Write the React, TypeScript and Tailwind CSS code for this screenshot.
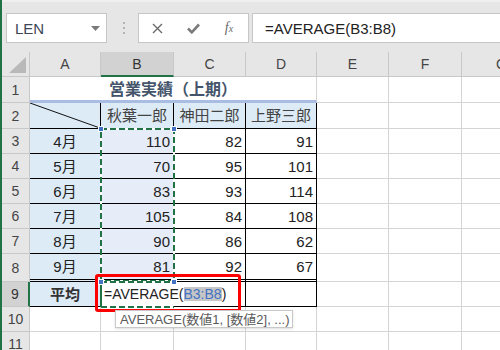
import type { ReactNode } from 'react';

const rows: [string, number, number, number][] = [
  ['4月', 110, 82, 91],
  ['5月', 70, 95, 101],
  ['6月', 83, 93, 114],
  ['7月', 105, 84, 108],
  ['8月', 90, 86, 62],
  ['9月', 81, 92, 67],
];

function RowHead({ children, active }: { children: ReactNode; active?: boolean }) {
  return (
    <div
      className={
        active
          ? 'w-[28px] shrink-0 flex items-center justify-center bg-[#d2d2d2] border-r-2 border-r-[#217346] border-b border-b-[#c8c8c8] text-[14px] text-[#333]'
          : 'w-[28px] shrink-0 flex items-center justify-center bg-[#e6e6e6] border-r border-b border-[#c8c8c8] text-[14px] text-[#444]'
      }
    >
      {children}
    </div>
  );
}

function Grid() {
  // plain light gridline cells for E, F, G
  const plain = (
    <>
      <div className="w-[72px] shrink-0 border-r border-b border-[#d4d4d4]" />
      <div className="w-[73px] shrink-0 border-r border-b border-[#d4d4d4]" />
      <div className="w-[80px] shrink-0 border-r border-b border-[#d4d4d4]" />
    </>
  );

  return (
    <div className="flex flex-col text-[15px] text-[#222]">
      {/* column header */}
      <div className="flex h-[25px] bg-[#e6e6e6] text-[14px] text-[#444]">
        <div className="relative w-[28px] shrink-0 border-r border-b border-[#c8c8c8]">
          <svg className="absolute left-[7px] top-[5px]" width="17" height="17" viewBox="0 0 17 17">
            <polygon points="0,16 17,16 17,0" fill="#b9b9b9" />
          </svg>
        </div>
        {['A', 'B', 'C', 'D', 'E', 'F', 'G'].map((c, i) => {
          const w = ['w-[71px]', 'w-[73px]', 'w-[72px]', 'w-[71px]', 'w-[72px]', 'w-[73px]', 'w-[80px]'][i];
          return c === 'B' ? (
            <div key={c} className={`${w} shrink-0 flex items-center justify-center bg-[#d2d2d2] border-r border-[#c8c8c8] border-b-2 border-b-[#217346] text-[#333]`}>
              {c}
            </div>
          ) : (
            <div key={c} className={`${w} shrink-0 flex items-center justify-center border-r border-b border-[#c8c8c8]`}>
              {c}
            </div>
          );
        })}
      </div>

      {/* row 1 - title */}
      <div className="flex h-[26px]">
        <RowHead>1</RowHead>
        <div className="w-[287px] shrink-0 flex items-center justify-center border-b-[3px] border-[#a9bde3] border-r border-r-[#d4d4d4] font-bold text-[16px] text-[#44546a] pt-[2px]">
          営業実績（上期）
        </div>
        {plain}
      </div>

      {/* row 2 - names */}
      <div className="flex h-[26px] text-[#444]">
        <RowHead>2</RowHead>
        <div className="relative w-[71px] shrink-0 bg-[#ddebf7] border-r border-b border-black">
          <svg className="absolute inset-0" width="100%" height="100%" viewBox="0 0 70 25" preserveAspectRatio="none">
            <line x1="0" y1="0" x2="70" y2="25" stroke="#111" strokeWidth="1" />
          </svg>
        </div>
        <div className="w-[73px] shrink-0 flex items-center justify-center bg-[#ddebf7] border-r border-b border-black">秋葉一郎</div>
        <div className="w-[72px] shrink-0 flex items-center justify-center bg-[#ddebf7] border-r border-b border-black">神田二郎</div>
        <div className="w-[71px] shrink-0 flex items-center justify-center bg-[#ddebf7] border-r border-b border-black">上野三郎</div>
        {plain}
      </div>

      {/* rows 3-8 */}
      {rows.map(([m, b, c, d], i) =>
        i < 5 ? (
          <div key={m} className="flex h-[25px]">
            <RowHead>{i + 3}</RowHead>
            <div className="w-[71px] shrink-0 flex items-center justify-center bg-[#ddebf7] border-r border-b border-black">{m}</div>
            <div className="w-[73px] shrink-0 flex items-center justify-end pr-[3px] bg-[#e6edf8] border-r border-b border-black">{b}</div>
            <div className="w-[72px] shrink-0 flex items-center justify-end pr-[3px] border-r border-b border-black">{c}</div>
            <div className="w-[71px] shrink-0 flex items-center justify-end pr-[3px] border-r border-b border-black">{d}</div>
            {plain}
          </div>
        ) : (
          <div key={m} className="flex h-[28px]">
            <RowHead>{i + 3}</RowHead>
            <div className="w-[71px] shrink-0 flex items-center justify-center bg-[#ddebf7] border-r border-black border-b-[3px] border-b-black border-double">{m}</div>
            <div className="w-[73px] shrink-0 flex items-center justify-end pr-[3px] bg-[#e6edf8] border-r border-black border-b-[3px] border-double">{b}</div>
            <div className="w-[72px] shrink-0 flex items-center justify-end pr-[3px] border-r border-black border-b-[3px] border-double">{c}</div>
            <div className="w-[71px] shrink-0 flex items-center justify-end pr-[3px] border-r border-black border-b-[3px] border-double">{d}</div>
            {plain}
          </div>
        )
      )}

      {/* row 9 - average, B9 in edit mode */}
      <div className="flex h-[25px]">
        <RowHead active>9</RowHead>
        <div className="w-[71px] shrink-0 flex items-center justify-center bg-[#ddebf7] border-r border-b border-black font-bold text-[#333]">平均</div>
        <div className="relative z-10 w-[73px] shrink-0 flex items-center pl-[3px] border-b border-black whitespace-nowrap overflow-visible text-[14px]">
          <span>=AVERAGE(</span>
          <span className="bg-[#c6c6c6] text-[#4472c4]">B3:B8</span>
          <span>)</span>
        </div>
        <div className="w-[72px] shrink-0 border-r border-b border-black" />
        <div className="w-[71px] shrink-0 border-r border-b border-black" />
        {plain}
      </div>

      {/* rows 10, 11 */}
      {[10, 11].map((n) => (
        <div key={n} className="flex h-[25px]">
          <RowHead>{n}</RowHead>
          <div className="w-[71px] shrink-0 border-r border-b border-[#d4d4d4]" />
          <div className="w-[73px] shrink-0 border-r border-b border-[#d4d4d4]" />
          <div className="w-[72px] shrink-0 border-r border-b border-[#d4d4d4]" />
          <div className="w-[71px] shrink-0 border-r border-b border-[#d4d4d4]" />
          {plain}
        </div>
      ))}
    </div>
  );
}

function FormulaBar() {
  return (
    <div className="h-[52px] shrink-0 flex items-start pt-[11px] pl-[4px] bg-[#e6e6e6] border-t-2 border-[#efefef]">
      {/* name box */}
      <div className="w-[101px] h-[30px] shrink-0 flex items-center justify-between pl-[8px] pr-[6px] bg-white border border-[#c6c6c6]">
        <span className="text-[15px] text-[#3b4656]">LEN</span>
        <svg width="9" height="5" viewBox="0 0 9 5">
          <polygon points="0,0 9,0 4.5,5" fill="#7a7a7a" />
        </svg>
      </div>
      <div className="w-[31px] h-[30px] shrink-0 flex flex-col items-center justify-center gap-[3px] pl-[2px]">
        <span className="w-[2px] h-[2px] bg-[#b4b4b4]" />
        <span className="w-[2px] h-[2px] bg-[#b4b4b4]" />
        <span className="w-[2px] h-[2px] bg-[#b4b4b4]" />
      </div>
      {/* cancel / enter / fx */}
      <div className="w-[111px] h-[30px] shrink-0 flex items-center bg-white border border-[#c6c6c6]">
        <div className="w-[36px] flex justify-center">
          <svg width="11" height="11" viewBox="0 0 11 11">
            <path d="M1 1 L10 10 M10 1 L1 10" stroke="#6b6b6b" strokeWidth="1.4" />
          </svg>
        </div>
        <div className="w-[36px] flex justify-center">
          <svg width="13" height="11" viewBox="0 0 13 11">
            <path d="M1 5.5 L4.8 9.3 L12 1.5" stroke="#7a7a7a" strokeWidth="2.6" fill="none" />
          </svg>
        </div>
        <div className="w-[36px] flex justify-center items-baseline font-['Liberation_Serif',serif] italic text-[#6b6b6b]">
          <span className="text-[14px]">f</span>
          <span className="text-[10px]">x</span>
        </div>
      </div>
      {/* formula */}
      <div className="flex-1 h-[30px] ml-[3px] flex items-center pl-[12px] bg-white border border-r-0 border-[#c6c6c6] text-[15px] text-[#222]">
        =AVERAGE(B3:B8)
      </div>
    </div>
  );
}

export default function App() {
  return (
    <div className="relative w-[500px] h-[350px] overflow-hidden bg-white flex font-['Liberation_Sans','Noto_Sans_CJK_JP',sans-serif] leading-none">
      <div className="w-[2px] shrink-0 bg-[#217346]" />
      <div className="flex-1 flex flex-col min-w-0">
        <FormulaBar />
        <Grid />
      </div>

      {/* reference range B3:B8 */}
      <svg className="absolute left-[100px] top-[128px] z-20" width="75" height="154" viewBox="0 0 75 154">
        <rect x="1" y="1" width="73" height="152" fill="none" stroke="#ffffff" strokeWidth="2" />
        <rect x="1" y="1" width="73" height="152" fill="none" stroke="#217346" strokeWidth="2" strokeDasharray="6 3" />
      </svg>
      <span className="absolute z-30 left-[98px] top-[126px] w-[6px] h-[6px] bg-[#4472c4] border border-white" />
      <span className="absolute z-30 left-[171px] top-[126px] w-[6px] h-[6px] bg-[#4472c4] border border-white" />

      {/* active cell B9: text runs over the right edge */}
      <svg className="absolute left-[100px] top-[281px] z-20" width="75" height="27" viewBox="0 0 75 27">
        <path d="M1 26 L1 1 L74 1 M1 26 L74 26" fill="none" stroke="#ffffff" strokeWidth="2" />
        <path d="M1 1 L74 1 M1 26 L74 26" fill="none" stroke="#217346" strokeWidth="2" strokeDasharray="6 3" />
        <path d="M1 1 L1 26" fill="none" stroke="#217346" strokeWidth="2" />
      </svg>
      <span className="absolute z-30 left-[98px] top-[279px] w-[6px] h-[6px] bg-[#4472c4] border border-white" />
      <span className="absolute z-30 left-[171px] top-[279px] w-[6px] h-[6px] bg-[#4472c4] border border-white" />

      {/* annotation box */}
      <div className="absolute z-40 left-[95px] top-[274px] w-[146px] h-[38px] border-[3.5px] border-[#ff0000] rounded-[3px]" />

      {/* function tooltip */}
      <div className="absolute z-40 left-[115px] top-[310px] w-[178px] h-[18px] flex items-center pl-[4px] bg-white border border-[#c8c8c8] shadow-sm text-[13px] text-[#5a5a5a] whitespace-nowrap">
        AVERAGE(数値1, [数値2], ...)
      </div>
    </div>
  );
}
